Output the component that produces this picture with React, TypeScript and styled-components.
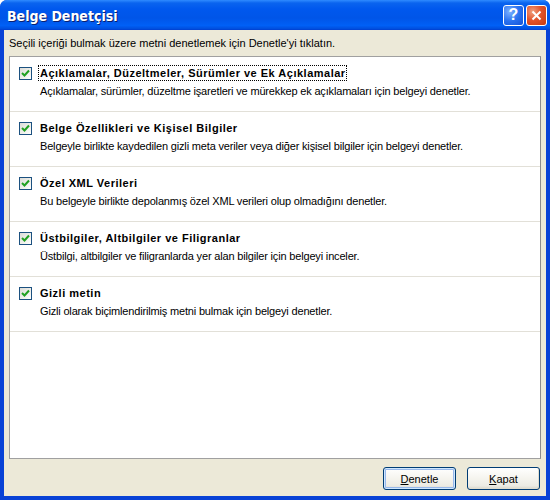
import React from "react";
import styled, { createGlobalStyle } from "styled-components";

const Global = createGlobalStyle`
  html, body { margin: 0; padding: 0; background: #fff; overflow: hidden; }
  * { box-sizing: border-box; }
`;

const Window = styled.div`
  width: 550px;
  height: 500px;
  display: flex;
  flex-direction: column;
  background: #0842d6;
  border-radius: 7px 7px 0 0;
  overflow: hidden;
  font-family: Tahoma, "Liberation Sans", Arial, sans-serif;
`;

const TitleBar = styled.div`
  height: 30px;
  flex: none;
  display: flex;
  align-items: center;
  padding: 0 3px 0 7px;
  background: linear-gradient(
    to bottom,
    #2f8bff 0%,
    #0a64ef 10%,
    #0058ee 30%,
    #0055e8 60%,
    #0060f6 85%,
    #0050e0 95%,
    #003ed0 100%
  );
`;

const Title = styled.div`
  flex: 1;
  color: #fff;
  font-family: "Liberation Sans Narrow", "DejaVu Sans Condensed", sans-serif;
  font-weight: bold;
  font-size: 14px;
  text-shadow: 1px 1px 0 #0a1f70;
  padding-top: 1px;
`;

const CaptionButton = styled.div<{ $close?: boolean }>`
  width: 21px;
  height: 21px;
  margin-left: 2px;
  border: 1px solid #fff;
  border-radius: 3px;
  display: flex;
  align-items: center;
  justify-content: center;
  background: ${(p) =>
    p.$close
      ? "radial-gradient(circle at 30% 30%, #f0a080 0%, #e2542c 45%, #c53a10 100%)"
      : "radial-gradient(circle at 30% 30%, #7fb2ff 0%, #2a72f0 50%, #1553d6 100%)"};
  color: #fff;
  font-family: "Liberation Sans", Arial, sans-serif;
  font-weight: bold;
  font-size: 16px;
  line-height: 1;
`;

const Body = styled.div`
  flex: 1;
  margin: 0 4px 4px 4px;
  background: #ece9d8;
  display: flex;
  flex-direction: column;
  padding: 6px 5px 0 5px;
`;

const Intro = styled.div`
  font-size: 11px;
  color: #000;
  height: 20px;
  line-height: 14px;
`;

const Panel = styled.div`
  height: 403px;
  flex: none;
  background: #fff;
  border: 1px solid #a0a0a0;
  border-right-color: #8c8c8c;
  display: flex;
  flex-direction: column;
`;

const Section = styled.div`
  height: 55px;
  border-bottom: 1px solid #e2e0d8;
  padding: 8px 0 0 9px;
  display: grid;
  grid-template-columns: 19px 1fr;
  grid-template-rows: 16px 16px;
  row-gap: 3px;
`;

const Check = styled.div`
  width: 13px;
  height: 13px;
  margin-top: 2px;
  border: 1px solid #1c5180;
  background: linear-gradient(135deg, #dcdcd7 0%, #f4f4f0 70%, #fff 100%);
  display: flex;
  align-items: center;
  justify-content: center;
`;

const Heading = styled.div<{ $focus?: boolean }>`
  font-size: 11px;
  font-weight: bold;
  letter-spacing: 0.5px;
  color: #000;
  line-height: 14px;
  justify-self: start;
  padding: 0 0 0 1px;
  border: 1px dotted ${(p) => (p.$focus ? "#000" : "transparent")};
`;

const Desc = styled.div`
  grid-column: 2;
  font-size: 11px;
  letter-spacing: -0.17px;
  color: #000;
  line-height: 14px;
  padding-left: 2px;
`;

const Footer = styled.div`
  flex: 1;
  display: flex;
  justify-content: flex-end;
  align-items: flex-start;
  gap: 11px;
  padding: 8px 1px 0 0;
`;

const Button = styled.button<{ $default?: boolean }>`
  width: 73px;
  height: 23px;
  border: 1px solid #003c74;
  border-radius: 3px;
  background: linear-gradient(to bottom, #ffffff 0%, #f5f4ee 50%, #ecebe4 85%, #d8d5c8 100%);
  box-shadow: ${(p) =>
    p.$default
      ? "inset 0 0 0 1px #cee7ff, inset 0 0 0 2px #98b8ea"
      : "inset -1px -1px 0 #e0ddd0"};
  font-family: Tahoma, "Liberation Sans", Arial, sans-serif;
  font-size: 11px;
  color: #000;
  padding: 0;
  u { text-decoration: underline; }
`;

const CheckMark = () => (
  <svg width="9" height="9" viewBox="0 0 9 9">
    <path d="M1 4 L3.5 6.5 L8 1.5" fill="none" stroke="#21a121" strokeWidth="2" />
  </svg>
);

const items = [
  {
    t: "Açıklamalar, Düzeltmeler, Sürümler ve Ek Açıklamalar",
    d: "Açıklamalar, sürümler, düzeltme işaretleri ve mürekkep ek açıklamaları için belgeyi denetler.",
  },
  {
    t: "Belge Özellikleri ve Kişisel Bilgiler",
    d: "Belgeyle birlikte kaydedilen gizli meta veriler veya diğer kişisel bilgiler için belgeyi denetler.",
  },
  {
    t: "Özel XML Verileri",
    d: "Bu belgeyle birlikte depolanmış özel XML verileri olup olmadığını denetler.",
  },
  {
    t: "Üstbilgiler, Altbilgiler ve Filigranlar",
    d: "Üstbilgi, altbilgiler ve filigranlarda yer alan bilgiler için belgeyi inceler.",
  },
  {
    t: "Gizli metin",
    d: "Gizli olarak biçimlendirilmiş metni bulmak için belgeyi denetler.",
  },
];

export default function App() {
  return (
    <>
      <Global />
      <Window>
        <TitleBar>
          <Title>Belge Denetçisi</Title>
          <CaptionButton>?</CaptionButton>
          <CaptionButton $close>
            <svg width="11" height="11" viewBox="0 0 11 11">
              <path d="M1.5 1.5 L9.5 9.5 M9.5 1.5 L1.5 9.5" stroke="#fff" strokeWidth="2" />
            </svg>
          </CaptionButton>
        </TitleBar>
        <Body>
          <Intro>Seçili içeriği bulmak üzere metni denetlemek için Denetle'yi tıklatın.</Intro>
          <Panel>
            {items.map((it, i) => (
              <Section key={i}>
                <Check>
                  <CheckMark />
                </Check>
                <Heading $focus={i === 0}>{it.t}</Heading>
                <Desc>{it.d}</Desc>
              </Section>
            ))}
          </Panel>
          <Footer>
            <Button $default>
              <u>D</u>enetle
            </Button>
            <Button>
              <u>K</u>apat
            </Button>
          </Footer>
        </Body>
      </Window>
    </>
  );
}
